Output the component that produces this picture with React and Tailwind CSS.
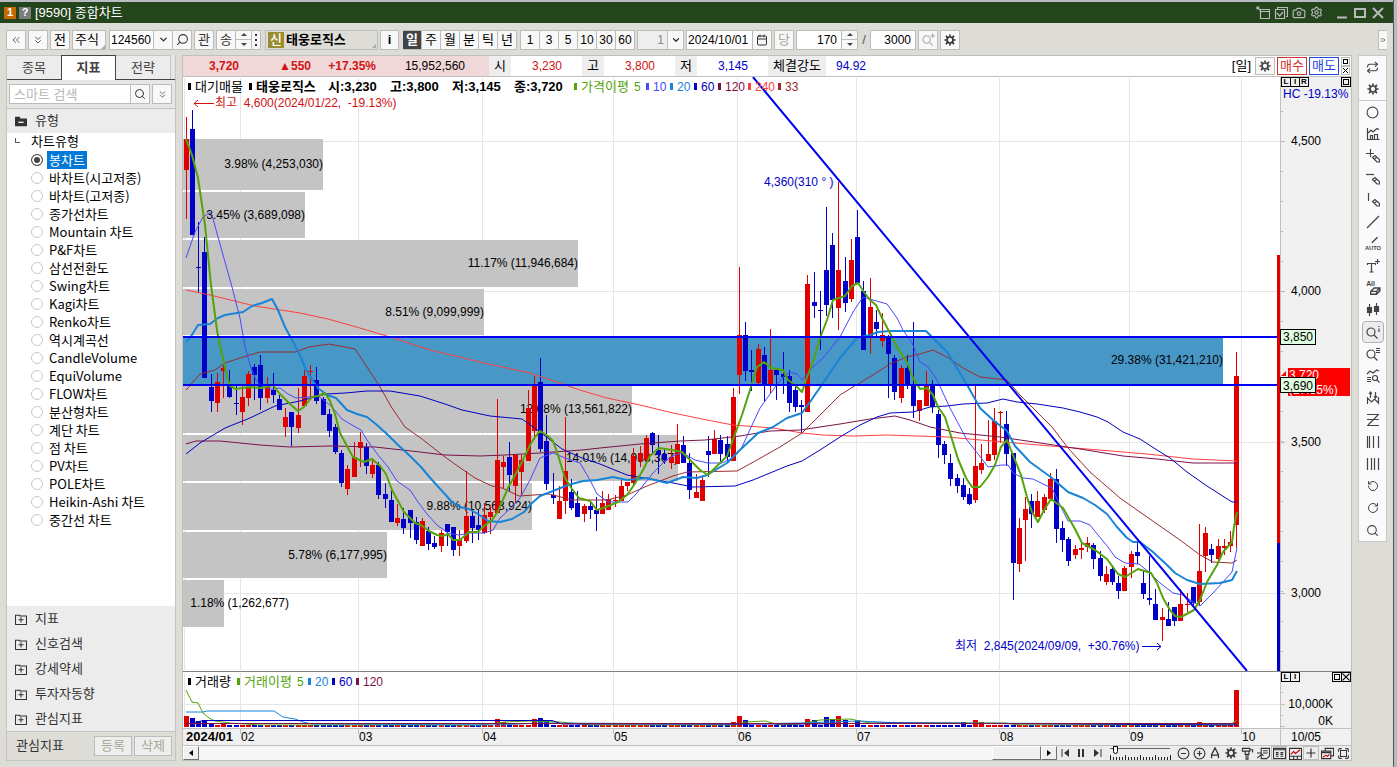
import React, { useState } from 'react';
import {
  Camera, ChevronDown, ChevronsDown, ChevronsLeft, ChevronsRight, Calendar, Circle, CircleMinus, CirclePlus,
  Plus, Repeat, RotateCcw, RotateCw, Search, Settings, Maximize,
} from 'lucide-react';

const RED = '#e00000';
const BLUE = '#0000c8';

// [up, high, low, bodyTop, bodyBottom]
const candles = [
  [1, 117, 219, 139, 170], [0, 110, 235, 129, 235], [0, 222, 292, 267, 268], [0, 237, 378, 252, 378], [0, 374, 412, 387, 401],
  [1, 373, 412, 382, 403], [1, 364, 398, 368, 371], [0, 370, 398, 386, 397], [0, 386, 415, 403, 404], [1, 385, 425, 397, 412],
  [1, 371, 406, 374, 398], [0, 364, 400, 367, 375], [0, 355, 410, 365, 398], [1, 377, 403, 385, 398], [0, 373, 403, 390, 395],
  [0, 395, 410, 399, 410], [1, 408, 437, 417, 427], [0, 412, 446, 412, 427], [1, 388, 433, 415, 428], [1, 370, 406, 376, 406],
  [1, 365, 399, 371, 372], [0, 367, 404, 380, 401], [0, 397, 415, 399, 415], [0, 409, 437, 414, 431], [0, 424, 454, 427, 452],
  [0, 450, 487, 453, 483], [1, 465, 495, 469, 489], [1, 442, 477, 457, 477], [1, 432, 467, 442, 448], [0, 443, 474, 447, 466],
  [1, 458, 478, 465, 474], [0, 462, 499, 465, 495], [0, 483, 508, 494, 499], [0, 490, 522, 500, 522], [1, 504, 526, 518, 523],
  [0, 508, 534, 519, 528], [0, 510, 538, 510, 523], [0, 517, 544, 522, 540], [1, 518, 546, 521, 546], [0, 527, 550, 531, 544],
  [0, 536, 549, 543, 547], [1, 530, 552, 533, 546], [0, 524, 546, 524, 532], [0, 527, 556, 527, 550], [1, 530, 556, 540, 546],
  [1, 471, 543, 516, 541], [0, 510, 543, 516, 528], [0, 510, 540, 525, 530], [1, 503, 534, 515, 533], [1, 506, 534, 512, 517],
  [1, 399, 513, 460, 513], [1, 456, 488, 462, 467], [0, 442, 492, 457, 475], [1, 455, 503, 455, 486], [1, 455, 495, 460, 472],
  [1, 390, 461, 408, 461], [1, 376, 440, 386, 431], [0, 358, 452, 382, 449], [0, 415, 490, 441, 484], [0, 473, 504, 495, 498],
  [1, 486, 519, 501, 519], [1, 417, 514, 471, 501], [0, 479, 510, 492, 508], [0, 491, 517, 503, 517], [1, 504, 522, 506, 514],
  [0, 502, 519, 506, 510], [0, 497, 531, 510, 514], [1, 491, 514, 503, 514], [1, 494, 510, 499, 510], [1, 495, 507, 500, 501],
  [1, 480, 501, 486, 501], [1, 482, 491, 482, 486], [1, 448, 487, 456, 483], [1, 446, 467, 453, 461], [1, 435, 461, 438, 460],
  [0, 432, 454, 433, 445], [0, 435, 474, 450, 455], [0, 449, 464, 454, 460], [1, 445, 469, 457, 463], [1, 424, 464, 444, 464],
  [0, 436, 463, 445, 463], [0, 453, 499, 463, 490], [1, 474, 498, 492, 498], [1, 477, 501, 480, 501], [0, 436, 477, 451, 455],
  [1, 430, 454, 439, 454], [0, 435, 464, 440, 454], [0, 436, 461, 444, 457], [1, 388, 461, 397, 461], [1, 267, 394, 335, 375],
  [0, 322, 381, 335, 371], [0, 350, 391, 370, 372], [1, 344, 384, 349, 383], [0, 347, 402, 355, 384], [1, 329, 393, 370, 384],
  [0, 369, 400, 370, 375], [0, 352, 394, 374, 377], [0, 370, 412, 376, 403], [0, 387, 412, 390, 407], [0, 400, 433, 405, 407],
  [1, 275, 412, 284, 412], [0, 272, 318, 302, 306], [0, 291, 350, 310, 311], [0, 207, 316, 270, 305], [0, 233, 318, 245, 300],
  [1, 182, 330, 270, 308], [0, 257, 312, 281, 303], [1, 239, 302, 260, 299], [0, 210, 284, 237, 283], [0, 281, 350, 291, 350],
  [1, 278, 354, 307, 336], [0, 310, 336, 322, 329], [1, 313, 347, 335, 341], [0, 335, 398, 337, 354], [0, 355, 400, 358, 392],
  [1, 365, 403, 368, 398], [0, 355, 389, 368, 385], [0, 322, 418, 385, 406], [1, 400, 421, 400, 411], [1, 371, 406, 385, 406],
  [0, 380, 413, 385, 407], [0, 410, 458, 414, 445], [0, 441, 464, 444, 455], [0, 454, 486, 463, 479], [0, 474, 493, 478, 486],
  [0, 478, 500, 485, 497], [0, 488, 505, 494, 504], [1, 386, 503, 466, 500], [1, 444, 474, 463, 470], [1, 420, 461, 454, 461],
  [1, 408, 460, 421, 455], [1, 411, 443, 412, 413], [0, 411, 466, 424, 454], [0, 453, 600, 453, 563], [1, 518, 572, 528, 564],
  [1, 497, 561, 509, 520], [0, 494, 528, 501, 514], [1, 491, 517, 501, 517], [1, 494, 513, 497, 510], [1, 473, 500, 479, 499],
  [0, 469, 543, 479, 529], [0, 521, 552, 528, 540], [0, 537, 566, 539, 561], [1, 545, 559, 549, 555], [1, 543, 559, 548, 550],
  [1, 537, 552, 543, 547], [0, 543, 569, 545, 559], [0, 551, 581, 558, 576], [1, 566, 585, 574, 582], [0, 565, 585, 569, 582],
  [0, 576, 599, 583, 591], [1, 566, 591, 568, 591], [1, 551, 578, 554, 567], [0, 542, 564, 552, 556], [0, 571, 599, 583, 594],
  [0, 556, 605, 598, 600], [0, 589, 620, 604, 620], [1, 608, 641, 617, 620], [0, 602, 626, 619, 626], [0, 607, 626, 607, 621],
  [1, 589, 621, 604, 621], [1, 593, 612, 604, 605], [0, 587, 607, 587, 603], [1, 524, 605, 571, 602], [1, 527, 572, 533, 556],
  [0, 544, 563, 549, 555], [1, 539, 563, 546, 559], [1, 539, 555, 546, 548], [1, 531, 552, 542, 546], [1, 352, 548, 376, 525],
];

const candleX = (i) => Math.round(183.8 + i * 6.216);

const averages = [
  { color: '#ff4040', width: 1, points: '186,290 210,295 255,306 300,313 328,319 360,328 390,337 430,350 480,362 530,373 583,391 607,398 640,405 673,413 707,420 733,425 773,428 802,433 823,435 853,436 887,435 947,437 1003,442 1063,447 1147,454 1193,459 1237,461' },
  { color: '#7a1248', width: 1, points: '186,444 196,441 220,441 260,445 290,447 330,446 375,447 420,452 445,455 480,456 505,455 540,453 582,450 600,448 640,444 680,441 705,440 740,436 770,431 800,430 840,424 870,419 895,416 910,420 930,427 960,433 1000,437 1047,444 1080,449 1123,456 1157,459 1193,463 1237,463' },
  { color: '#9a2c2c', width: 1, points: '186,390 200,374 215,370 225,363 240,358 260,352 295,352 309,347 329,344 345,347 355,349 369,370 380,387 392,408 405,427 422,439 445,457 459,467 475,478 492,486 502,488 519,496 549,494 573,500 607,500 627,495 647,486 673,476 687,472 737,471 757,460 780,447 802,433 823,412 840,395 853,387 873,375 890,364 907,357 920,354 933,350 947,357 963,368 980,377 1007,380 1020,395 1043,418 1052,427 1068,448 1090,472 1120,498 1147,517 1180,540 1200,555 1213,562 1232,563 1237,560' },
  { color: '#0000c0', width: 1, points: '186,454 200,443 225,428 250,418 275,406 300,401 326,394 345,393 367,391 390,391 420,396 445,404 462,410 490,416 522,419 540,432 562,449 582,458 600,464 627,475 650,479 673,483 693,487 735,486 753,480 770,473 787,466 802,461 820,450 840,437 860,425 877,417 890,413 913,412 930,407 947,406 963,404 987,403 1003,399 1017,402 1037,404 1063,408 1080,412 1097,417 1108,422 1123,432 1140,439 1157,450 1170,458 1187,472 1207,486 1232,502 1237,502' },
  { color: '#4848ff', width: 1, points: '186,258 195,232 203,217 209,213 212,215 218,237 225,262 232,287 240,318 245,347 251,368 256,380 262,387 271,389 280,388 288,394 296,398 308,397 318,396 325,401 332,407 342,419 352,425 361,430 367,440 378,455 388,467 397,481 410,490 418,502 427,514 437,525 448,533 459,535 470,533 484,533 493,530 500,518 510,509 520,498 530,480 540,458 553,453 565,458 580,463 590,480 597,494 608,502 628,502 637,493 653,473 665,461 675,455 683,453 695,460 708,463 722,463 733,458 742,447 753,423 760,408 773,390 783,377 790,372 797,374 802,380 812,368 823,358 840,337 853,312 863,297 873,300 887,304 897,318 903,330 912,343 920,362 928,367 937,380 950,408 967,440 982,459 988,467 1002,465 1008,465 1013,473 1023,478 1033,479 1043,484 1052,488 1060,505 1068,521 1080,521 1090,525 1098,535 1108,547 1115,557 1125,563 1139,564 1150,573 1160,583 1173,593 1183,595 1193,602 1200,606 1213,593 1223,582 1232,572 1237,548' },
  { color: '#1884d8', width: 2, points: '186,341 190,338 198,325 210,324 218,318 225,315 243,312 252,306 262,303 272,299 278,310 285,327 292,340 299,353 307,372 318,388 327,395 336,398 347,410 357,414 367,417 377,425 388,435 397,444 410,456 421,467 432,480 443,492 452,502 460,507 469,509 478,514 488,521 500,522 512,519 524,512 532,503 540,496 553,491 568,485 583,481 597,480 613,477 627,480 647,478 667,483 683,477 697,478 707,475 727,463 740,450 758,433 773,427 787,418 802,413 810,402 823,383 840,358 857,338 870,335 878,332 890,331 926,331 933,338 947,352 960,373 970,390 980,408 993,420 1007,431 1015,446 1030,462 1052,478 1068,492 1083,498 1095,505 1107,514 1117,527 1127,538 1133,542 1140,542 1153,552 1167,565 1175,573 1187,580 1200,584 1220,583 1232,580 1237,571' },
  { color: '#55a30a', width: 2, points: '186,139 192,155 198,178 205,225 211,285 217,330 219,341 226,372 230,386 236,389 249,387 262,388 273,385 280,394 290,404 298,411 304,407 312,397 318,396 325,393 330,401 335,414 340,433 348,448 353,457 364,462 372,459 380,466 386,474 392,490 404,512 415,523 421,525 429,531 437,535 443,536 448,534 453,540 460,540 469,532 478,532 484,526 492,520 497,513 502,502 508,488 514,477 522,462 530,445 535,437 540,431 548,436 553,441 558,455 565,478 572,489 579,498 590,501 597,510 606,507 618,502 627,495 634,485 643,470 650,456 659,448 672,450 682,452 690,460 700,470 708,475 717,466 727,456 735,434 742,415 750,390 757,367 764,362 771,368 783,370 788,380 795,385 802,392 806,380 813,362 820,338 827,320 833,300 845,296 852,286 858,283 864,292 870,300 876,305 883,320 890,333 897,347 907,362 913,378 920,389 927,388 933,395 938,407 945,417 950,433 958,459 966,478 972,487 980,487 988,477 995,465 1001,447 1007,440 1015,460 1021,475 1027,497 1032,512 1038,522 1044,510 1051,499 1063,508 1075,529 1082,543 1095,550 1107,559 1118,574 1125,577 1138,569 1151,573 1157,583 1163,598 1170,610 1175,616 1181,617 1194,610 1200,600 1207,582 1217,565 1223,552 1232,542 1234,527 1237,512' },
];

const profile = [
  { top: 139, height: 51, end: 323, label: '3.98% (4,253,030)' },
  { top: 192, height: 46, end: 305, label: '3.45% (3,689,098)' },
  { top: 240, height: 47, end: 578, label: '11.17% (11,946,684)' },
  { top: 289, height: 46, end: 484, label: '8.51% (9,099,999)' },
  { top: 337, height: 47, end: 1223, label: '29.38% (31,421,210)', hot: true },
  { top: 386, height: 47, end: 632, label: '12.68% (13,561,822)' },
  { top: 435, height: 46, end: 678, label: '14.01% (14,983,367)' },
  { top: 483, height: 47, end: 532, label: '9.88% (10,563,924)' },
  { top: 532, height: 46, end: 387, label: '5.78% (6,177,995)' },
  { top: 580, height: 47, end: 224, label: '1.18% (1,262,677)', labelEnd: 289 },
];

const months = [
  { x: 240, label: '02' }, { x: 358, label: '03' }, { x: 482, label: '04' }, { x: 613, label: '05' }, { x: 737, label: '06' },
  { x: 856, label: '07' }, { x: 999, label: '08' }, { x: 1129, label: '09' }, { x: 1241, label: '10' },
];

const priceLegend = [
  { x: 188, color: '#000', label: '대기매물' },
  { x: 249, color: '#000', label: '태웅로직스', bold: true },
  { x: 574, color: '#55a30a', label: '가격이평' },
  { x: 646, color: '#4848ff', label: '10' },
  { x: 670, color: '#1884d8', label: '20' },
  { x: 694, color: '#0000c0', label: '60' },
  { x: 718, color: '#7a1248', label: '120' },
  { x: 748, color: '#ff4040', label: '240' },
  { x: 778, color: '#9a2c2c', label: '33' },
];

const volumeLegend = [
  { x: 188, color: '#000', label: '거래량' },
  { x: 237, color: '#55a30a', label: '거래이평' },
  { x: 308, color: '#1884d8', label: '20' },
  { x: 332, color: '#0000c0', label: '60' },
  { x: 356, color: '#7a1248', label: '120' },
];

const volumeTops = {
  0: 716, 1: 718, 2: 721, 3: 720, 4: 723, 6: 723, 50: 719, 51: 722, 56: 719, 57: 718, 58: 721, 88: 722, 89: 716, 90: 720,
  100: 719, 101: 720, 103: 717, 104: 719, 105: 716, 106: 720, 108: 720, 125: 722, 127: 720, 128: 722, 163: 722, 169: 690,
};

const chartTypes = [
  '봉차트', '바차트(시고저종)', '바차트(고저종)', '종가선차트', 'Mountain 차트', 'P&F차트', '삼선전환도', 'Swing차트',
  'Kagi차트', 'Renko차트', '역시계곡선', 'CandleVolume', 'EquiVolume', 'FLOW차트', '분산형차트', '계단 차트', '점 차트',
  'PV차트', 'POLE차트', 'Heikin-Ashi 차트', '중간선 차트',
];

const sections = ['지표', '신호검색', '강세약세', '투자자동향', '관심지표'];

const Glyph = ({ children, size = 14, className = '' }) => (
  <svg width={size} height={size} viewBox="0 0 14 14" fill="none" stroke="currentColor" strokeWidth="1.2" className={className}>
    {children}
  </svg>
);

const Gear = ({ size = 14 }) => (
  <svg width={size} height={size} viewBox="0 0 14 14" fill="none" stroke="currentColor" strokeWidth="2">
    <circle cx="7" cy="7" r="3.5" />
    <path d="M7 0.5v2.500M7 11v2.500M0.500 7h2.500M11 7h2.500M2.300 2.300l2 2M9.700 9.700l2 2M11.700 2.300l-2 2M4.300 9.700l-2 2" />
  </svg>
);

const Pencil = () => <path d="M6.500 8.500l2.500-2 4.500 4v2.500h-2.500zM8.500 10l2.500-2" />;

const tools = [
  { name: '새로고침', icon: <Repeat size={13} strokeWidth={2} /> },
  { name: '설정', icon: <Gear size={12} /> },
  { name: '원', icon: <Circle size={13} strokeWidth={2} /> },
  { name: '보조지표', icon: <Glyph><path d="M1.5 1v11.5h12M4.5 12V8.5h2V12M8.5 12V7.5h3V12M2 6l3-3 2 2 4-3.5 2 1" /></Glyph> },
  { name: '십자선', icon: <Glyph><path d="M0 4.5h8M4.5 0v8" /><Pencil /></Glyph> },
  { name: '수평선', icon: <Glyph><path d="M0 3.5h8" /><Pencil /></Glyph> },
  { name: '수직선', icon: <Glyph><path d="M2.5 0v8" /><Pencil /></Glyph> },
  { name: '추세선', icon: <Glyph><path d="M1 13L13 1" /></Glyph> },
  { name: '자동추세', icon: <Glyph size={16}><path d="M6 6l5-5" /><text x="7" y="12.5" fontSize="5" textAnchor="middle" fill="currentColor" stroke="none" fontWeight="bold">AUTO</text></Glyph> },
  { name: '문자', icon: <Glyph><path d="M1.5 6V4.5h8V6M5.5 4.5V13M3.5 13h4M9 2.5h5M11.5 0v5" /></Glyph> },
  { name: '전체삭제', icon: <Glyph size={16}><text x="1" y="5" fontSize="6" fill="currentColor" stroke="none" fontWeight="bold">All</text><path d="M5 10l3-3h5v2.5l-3 3H5zM5 10h5v2.500M10 10l3-3" /></Glyph> },
  { name: '캔들', icon: <Glyph><path d="M3.5 1v12M10.500 0v12" /><path d="M1.500 4.500h4v5h-4zM8.500 3.500h4v5h-4z" fill="currentColor" /></Glyph> },
  { name: '정보보기', active: true, icon: <Glyph><circle cx="5" cy="7" r="4" /><path d="M8 10l3.500 3.500M13 3.500V7M13 1v1" /></Glyph> },
  { name: '목록보기', icon: <Glyph><circle cx="5" cy="7" r="4" /><path d="M8 10l3.500 3.500M10 1.500h4M10 3.500h4M10 5.500h4" /></Glyph> },
  { name: '패턴검색', icon: <Glyph><path d="M1 5l3-3 3 2 4-3 2 1M1 8.500h4M1 10.500h4M1 12.500h4" /><circle cx="9" cy="9" r="2.500" /><path d="M11 11l2.500 2.500" /></Glyph> },
  { name: '고저표시', icon: <Glyph><path d="M1.500 13V7l4 4 3-3 4 4V6M4.500 1v6M3 3l1.500-2L6 3M9.500 7V1M8 5l1.500 2L11 5" /></Glyph> },
  { name: '피보나치', icon: <Glyph><path d="M1 1.500h12M1 6.500h12M1 12.500h12M2 12L12 2" /></Glyph> },
  { name: '시간대', icon: <Glyph><path d="M1.500 1v12M3.500 1v12M7.500 1v12M12.500 1v12" /></Glyph> },
  { name: '등간격', icon: <Glyph><path d="M1.500 1v12M5.500 1v12M8.500 1v12M12.500 1v12" /></Glyph> },
  { name: '되돌리기', icon: <RotateCcw size={12} strokeWidth={2} /> },
  { name: '다시실행', icon: <RotateCw size={12} strokeWidth={2} /> },
  { name: '확대', icon: <Search size={13} strokeWidth={2} /> },
];

const box = 'flex h-5 items-center justify-center border border-[#bcbcbc] bg-[#f8f8f8] text-[#333]';

const TitleBar = () => (
  <header className="flex h-[23px] items-center border-t-2 border-[#b9bcc2] bg-[#24441c] px-1 text-[#b9b9b9]">
    <span className="mr-[3px] flex h-3 w-3 items-center justify-center bg-[#c46a00] text-[11px] font-bold text-white">1</span>
    <span className="mr-1 flex h-3 w-3 items-center justify-center bg-[#7c7c7c] text-[11px] font-bold text-white">?</span>
    <h1 className="text-[13px] leading-5 text-white">[9590] 종합차트</h1>
    <div className="ml-auto flex items-center gap-1 pr-1">
      <button aria-label="창 이동"><Glyph><path d="M4.5 3.500h9v9h-9zM5 5.500h8M1 1l3 3M1 3.500V1h2.500" /></Glyph></button>
      <button aria-label="창 복사"><Glyph><path d="M3.500 3V1.500h10v9H12M1.500 3.500h9v9h-9zM3 7l2.500 3L9 6" /></Glyph></button>
      <button aria-label="화면 캡처"><Camera size={14} strokeWidth={2} /></button>
      <button aria-label="환경설정"><Settings size={13} strokeWidth={2} /></button>
      <button aria-label="최소화" className="ml-2"><Glyph><path d="M2 11.500h10" strokeWidth="2" /></Glyph></button>
      <button aria-label="최대화"><Glyph><path d="M2 3h10v8H2z" strokeWidth="2" /></Glyph></button>
      <button aria-label="닫기"><Glyph><path d="M2 2l10 10M12 2L2 12" strokeWidth="2" /></Glyph></button>
    </div>
  </header>
);

const Spinner = () => (
  <div className="-ml-px flex h-5 w-[17px] flex-col border border-[#bcbcbc] bg-[#f8f8f8] text-[#444]">
    <button aria-label="증가" className="flex flex-1 items-center justify-center border-b border-[#bcbcbc]">
      <svg width="6" height="3" viewBox="0 0 6 3" fill="currentColor"><path d="M0 3l3-3 3 3z" /></svg>
    </button>
    <button aria-label="감소" className="flex flex-1 items-center justify-center">
      <svg width="6" height="3" viewBox="0 0 6 3" fill="currentColor"><path d="M0 0l3 3 3-3z" /></svg>
    </button>
  </div>
);

const Toolbar = () => {
  const [period, setPeriod] = useState('일');
  return (
    <div className="flex h-8 items-center gap-[2px] px-[6px] pt-px text-[13px]">
      <button aria-label="처음" className={`${box} w-5`}><ChevronsLeft size={12} strokeWidth={1.5} /></button>
      <button aria-label="펼치기" className={`${box} w-5`}><ChevronsDown size={12} strokeWidth={1.5} /></button>
      <button className={`${box} w-5 text-black`}>전</button>
      <button className={`${box} relative w-[34px] pr-1 text-black`}>
        주식
        <span className="absolute bottom-0 right-0 h-0 w-0 border-2 border-transparent border-b-[#aaa] border-r-[#aaa]" />
      </button>
      <div className="ml-px flex">
        <input aria-label="종목코드" defaultValue="124560" className="h-5 w-[45px] border border-[#bcbcbc] bg-white px-px text-xs" />
        <button aria-label="종목 목록" className={`${box} -ml-px w-5`}><ChevronDown size={11} strokeWidth={3} /></button>
        <button aria-label="종목 검색" className={`${box} -ml-px w-5`}><Search size={13} strokeWidth={2} className="-scale-x-100" /></button>
      </div>
      <button className={`${box} w-5`}>관</button>
      <div className="flex">
        <button className={`${box} w-5`}>송</button>
        <Spinner />
        <button aria-label="더보기" className={`${box} -ml-px w-[10px]`}>
          <svg width="2" height="12" viewBox="0 0 2 12" fill="#333"><path d="M0 0h2v2H0zM0 5h2v2H0zM0 10h2v2H0z" /></svg>
        </button>
      </div>
      <button className="relative ml-[2px] flex h-5 w-[113px] items-center border border-[#bcbcbc] bg-[#dddcd6] px-[2px] font-bold">
        <span className="mr-[2px] flex h-4 w-4 items-center justify-center bg-[#9c8c30] font-medium text-white">신</span>
        태웅로직스
        <span className="absolute bottom-px right-px h-0 w-0 border-2 border-transparent border-b-[#aaa] border-r-[#aaa]" />
      </button>
      <button className={`${box} w-[19px] font-bold text-black`}>i</button>
      <div className="ml-[2px] flex">
        {['일', '주', '월', '분', '틱', '년'].map((p) => (
          <button
            key={p}
            onClick={() => setPeriod(p)}
            className={`flex h-5 w-[19px] items-center justify-center border-y border-r border-[#bcbcbc] ${period === p ? 'bg-[#444] font-bold text-white' : 'bg-[#f8f8f8] text-black'}`}
          >
            {p}
          </button>
        ))}
      </div>
      <div className="ml-px flex border-l border-[#bcbcbc] text-xs">
        {[1, 3, 5, 10, 30, 60].map((n) => (
          <button key={n} className="flex h-5 w-[19px] items-center justify-center border-y border-r border-[#bcbcbc] bg-[#f8f8f8] text-black">{n}</button>
        ))}
      </div>
      <div className="flex">
        <input aria-label="주기" defaultValue="1" className="h-5 w-[31px] border border-[#bcbcbc] bg-[#eee] px-[3px] text-right text-xs text-[#888]" />
        <button aria-label="주기 선택" className={`${box} -ml-px w-[17px]`}><ChevronDown size={10} strokeWidth={3} /></button>
      </div>
      <div className="flex">
        <input aria-label="날짜" defaultValue="2024/10/01" className="h-5 w-[67px] border border-[#bcbcbc] bg-white px-px text-xs" />
        <button aria-label="달력" className={`${box} -ml-px w-5`}><Calendar size={12} strokeWidth={2} /></button>
      </div>
      <button className={`${box} w-5 text-[#a8a898]`}>당</button>
      <div className="flex">
        <input aria-label="봉 개수" defaultValue="170" className="h-5 w-[46px] border border-[#bcbcbc] bg-white px-1 text-right text-xs" />
        <Spinner />
      </div>
      <span className="w-2 text-center text-[#555]">/</span>
      <input aria-label="전체 봉 개수" defaultValue="3000" className="h-5 w-[46px] border border-[#bcbcbc] bg-white px-1 text-right text-xs" />
      <button aria-label="확대" className={`${box} w-5 text-[#aaa]`}><Glyph size={13}><circle cx="5" cy="7" r="4" /><path d="M8 10l3.500 3.500M9 3h5M11.500 0.500v5" /></Glyph></button>
      <button aria-label="차트 설정" className={`${box} w-5`}><Gear size={12} /></button>
      <button aria-label="더보기" className={`${box} ml-auto w-[9px] border-r-0`}><ChevronsRight size={8} strokeWidth={2} /></button>
    </div>
  );
};

const Sidebar = () => {
  const [type, setType] = useState('봉차트');
  return (
    <aside className="flex w-[170px] shrink-0 flex-col border-x border-b border-[#c4c4c4] bg-[#e6e6e4] text-[13px] text-[#333]">
      <div className="flex h-[25px] border-b border-[#444] text-[#444]">
        <button className="w-[54px] border-t border-[#c4c4c4] bg-[#ececec]">종목</button>
        <button className="-mb-px w-[55px] border border-b-0 border-[#444] bg-white font-bold">지표</button>
        <button className="w-[55px] border-r border-t border-[#c4c4c4] bg-[#ececec]">전략</button>
      </div>
      <div className="flex h-7 items-center pl-[2px]">
        <input aria-label="스마트 검색" placeholder="스마트 검색" className="h-5 w-[122px] border border-[#bcbcbc] bg-white px-1 placeholder:text-[#b8b8b8]" />
        <button aria-label="검색" className={`${box} -ml-px w-5`}><Search size={12} strokeWidth={2} /></button>
        <button aria-label="펼치기" className={`${box} ml-[2px] w-5`}><ChevronsDown size={11} strokeWidth={1.5} /></button>
      </div>
      <button className="flex h-[25px] items-center gap-2 border-t border-[#c4c4c4] bg-[#ececec] pl-2">
        <Glyph size={12}><path d="M0 2h6v2h8v9H0z" fill="currentColor" stroke="none" /><path d="M4 8.500h6" stroke="#fff" strokeWidth="1.500" /></Glyph>
        유형
      </button>
      <div role="radiogroup" aria-labelledby="chart-type" className="flex-1 bg-white text-black">
        <div className="flex h-[18px] items-center pl-2">
          <span className="mb-1 mr-[11px] h-[5px] w-[5px] border-b border-l border-[#555]" />
          <span id="chart-type">차트유형</span>
        </div>
        {chartTypes.map((t) => (
          <label key={t} className="flex h-[18px] items-center pl-6">
            <input
              type="radio"
              name="chartType"
              checked={type === t}
              onChange={() => setType(t)}
              className="h-3 w-3 appearance-none rounded-full border border-[#c8c8c8] bg-white checked:border-[#555] checked:bg-[#444] checked:ring-2 checked:ring-inset checked:ring-white"
            />
            <span className={`ml-1 px-[2px] font-['Noto_Sans_CJK_KR',sans-serif] leading-[18px] ${type === t ? 'bg-[#0078d7] text-white' : ''}`}>{t}</span>
          </label>
        ))}
      </div>
      {sections.map((s) => (
        <button key={s} className="flex h-[25px] items-center gap-2 bg-[#ececec] pl-2">
          <Glyph size={12}><path d="M0.600 2.600h5v1h7.800v9.800H.6zM4 8h6M7 5v6" /></Glyph>
          {s}
        </button>
      ))}
      <div className="flex h-[29px] items-center gap-[2px] border-t border-[#c4c4c4] bg-[#dddcd6] pl-[9px] pr-[3px]">
        <span className="mr-auto">관심지표</span>
        <button className="h-5 w-[38px] border border-[#bcbcbc] bg-[#eee] leading-4 text-[#a8a898]">등록</button>
        <button className="h-5 w-[38px] border border-[#bcbcbc] bg-[#eee] leading-4 text-[#a8a898]">삭제</button>
      </div>
    </aside>
  );
};

const quotes = [
  { label: '시', value: '3,230', color: 'text-[#d01414]' },
  { label: '고', value: '3,800', color: 'text-[#d01414]' },
  { label: '저', value: '3,145', color: 'text-[#0000c8]' },
];

const QuoteBar = () => (
  <div className="flex h-[21px] items-center border-b border-[#c0c0c0] bg-white text-xs leading-5">
    <div className="flex bg-[#f0d8d8] pr-6 text-right font-bold text-[#d01414]">
      <span className="w-14">3,720</span>
      <span className="w-[72px]">▲550</span>
      <span className="w-[65px]">+17.35%</span>
      <span className="w-[89px] font-normal text-black">15,952,560</span>
    </div>
    {quotes.map((q) => (
      <React.Fragment key={q.label}>
        <span className="w-[22px] bg-[#eee] text-center text-[13px]">{q.label}</span>
        <span className={`w-[71px] pr-5 text-right ${q.color}`}>{q.value}</span>
      </React.Fragment>
    ))}
    <span className="w-[58px] bg-[#eee] text-center text-[13px]">체결강도</span>
    <span className="pl-[10px] text-[#0000c8]">94.92</span>
    <div className="ml-auto flex items-center gap-[2px] pr-px text-[13px]">
      <span className="mr-[2px]">[일]</span>
      <button aria-label="설정" className="flex h-[18px] w-5 items-center justify-center border border-[#bcbcbc] bg-[#f8f8f8] text-[#444]"><Gear size={12} /></button>
      <button className="h-[18px] w-[30px] border border-[#d03030] leading-4 text-[#d03030]">매수</button>
      <button className="h-[18px] w-[30px] border border-[#2048e0] leading-4 text-[#2048e0]">매도</button>
      <div className="flex flex-col">
        <button aria-label="최대화" className="flex h-[9px] w-[9px] items-center justify-center border border-[#bcbcbc]"><span className="h-[5px] w-[5px] border border-black" /></button>
        <button aria-label="닫기" className="flex h-[9px] w-[9px] items-center justify-center border border-[#bcbcbc]"><Glyph size={7}><path d="M2 2l10 10M12 2L2 12" strokeWidth="2" /></Glyph></button>
      </div>
    </div>
  </div>
);

const Legend = ({ items, y }) => items.map((item) => (
  <g key={item.x} fill={item.color}>
    <rect x={item.x} y={y - 8} width="3" height="7" />
    <text x={item.x + 7} y={y} fontSize={/\d/.test(item.label) ? 12 : 13} fontWeight={item.bold ? 'bold' : 'normal'}>{item.label}</text>
  </g>
));

const priceLabels = [{ y: 141, label: '4,500' }, { y: 291, label: '4,000' }, { y: 442, label: '3,500' }, { y: 593, label: '3,000' }];

const PricePane = () => (
  <svg viewBox="183 77 1168 594" className="block h-auto w-full bg-white" role="img" aria-label="가격 차트">
    <g fill="#e6e6e6">
      {[{ x: 184 }, ...months].map((m) => <rect key={m.x} x={m.x} y="78" width="1" height="592" />)}
      {priceLabels.map((p) => <rect key={p.y} x="183" y={p.y} width="1097" height="1" />)}
    </g>
    <g fontSize="12" textAnchor="end">
      {profile.map((p) => (
        <g key={p.top}>
          <rect x="183" y={p.top} width={p.end - 183} height={p.height} fill={p.hot ? '#4797c7' : '#c4c4c4'} />
          <text x={p.labelEnd || p.end} y={Math.floor(p.top + p.height / 2) + 4}>{p.label}</text>
        </g>
      ))}
    </g>
    <g shapeRendering="crispEdges">
      {candles.map(([up, high, low, top, bottom], i) => (
        <g key={i} fill={up ? RED : BLUE}>
          <rect x={candleX(i) + 2} y={high} width="1" height={low - high} />
          <rect x={candleX(i)} y={top} width="5" height={bottom - top} />
        </g>
      ))}
    </g>
    <g fill="none" strokeLinejoin="round">
      {averages.map((a) => <polyline key={a.color} points={a.points} stroke={a.color} strokeWidth={a.width} />)}
    </g>
    <g stroke="#0000f0" strokeWidth="2">
      <path d="M183 337h1098M183 385h1098" />
      <path d="M753 77L1247 671" />
    </g>
    <rect x="1277" y="255" width="3" height="288" fill={RED} />
    <rect x="1277" y="543" width="3" height="128" fill={BLUE} />

    <Legend items={priceLegend} y={91} />
    <g fontSize="13" fontWeight="bold">
      <text x="328" y="91">시:3,230</text>
      <text x="390" y="91">고:3,800</text>
      <text x="452" y="91">저:3,145</text>
      <text x="514" y="91">종:3,720</text>
    </g>
    <text x="634" y="91" fontSize="12" fill="#55a30a">5</text>
    <g fontSize="12" fill="#d01010">
      <path d="M214 103.500h-20M198 100l-4 3.500 4 3.500" stroke="#d01010" fill="none" />
      <text x="215" y="107">최고 &nbsp;4,600(2024/01/22,&nbsp; -19.13%)</text>
    </g>
    <g fontSize="12" fill="#0000c8">
      <text x="764" y="186">4,360(310 ° )</text>
      <text x="955" y="650">최저 &nbsp;2,845(2024/09/09,&nbsp; +30.76%)</text>
      <path d="M1142 646.500h19M1157 643l4 3.500-4 3.500" stroke="#0000c8" fill="none" />
    </g>

    <rect x="1281" y="77" width="70" height="594" fill="#f0f0f0" />
    <rect x="1280" y="77" width="1" height="594" fill="#c0c0c0" />
    <g fill="#b8b8b8">
      {Array.from({ length: 19 }, (_, i) => 111 + i * 30).map((y) => <rect key={y} x="1281" y={y} width="2" height="1" />)}
      {priceLabels.map((p) => <rect key={p.y} x="1281" y={p.y} width="4" height="1" />)}
    </g>
    <g fontSize="12">
      {priceLabels.map((p) => <text key={p.y} x="1291" y={p.y + 4}>{p.label}</text>)}
      <text x="1283" y="98" fill="#0000c8">HC -19.13%</text>
      <rect x="1288" y="368" width="62" height="28" fill="#ff0000" />
      <path d="M1281 376l5-5v5z" fill="#ff0000" />
      <text x="1289" y="379" fill="#fff">3,720</text>
      <text x="1289" y="394" fill="#fff">(17.35%)</text>
      <rect x="1280.500" y="329.500" width="35" height="15" fill="#e0ffe0" stroke="#000" />
      <text x="1283" y="341">3,850</text>
      <rect x="1280.500" y="377.500" width="35" height="15" fill="#e0ffe0" stroke="#000" />
      <text x="1283" y="390">3,690</text>
    </g>
  </svg>
);

const VolumePane = () => (
  <svg viewBox="183 672 1168 73" className="block h-auto w-full bg-white" role="img" aria-label="거래량 차트">
    <g fill="#e6e6e6">
      {[{ x: 184 }, ...months].map((m) => <rect key={m.x} x={m.x} y="673" width="1" height="54" />)}
      <rect x="183" y="704" width="1097" height="1" />
    </g>
    <g shapeRendering="crispEdges">
      {candles.map(([up], i) => {
        const top = volumeTops[i] || 725;
        return <rect key={i} x={candleX(i)} y={top} width="5" height={727 - top} fill={up ? RED : BLUE} />;
      })}
    </g>
    <g fill="none">
      <polyline points="186,690 192,702 198,703 203,713 209,718 215,721 230,723 260,725 480,725 505,722 530,721 560,722 590,725 735,725 745,722 765,721 780,725 800,724 820,720 850,719 870,723 985,723 1005,723 1020,725 1230,725 1237,720" stroke="#55a30a" />
      <polyline points="186,712 203,712 207,711 274,711 283,717 295,719 303,722 312,724 500,725 540,723 740,724 800,723 860,721 900,723 1237,724" stroke="#1884d8" />
      <polyline points="186,724 204,720.500 552,720.500 562,724 800,724 900,723 1237,725" stroke="#0000c0" />
      <polyline points="186,723.500 1237,723.500" stroke="#7a1248" />
    </g>
    <Legend items={volumeLegend} y={686} />
    <text x="297" y="686" fontSize="12" fill="#55a30a">5</text>

    <rect x="183" y="728" width="1168" height="17" fill="#f0f0f0" />
    <rect x="1281" y="672" width="70" height="73" fill="#f0f0f0" />
    <g fill="#c0c0c0">
      <rect x="1280" y="672" width="1" height="73" />
      <rect x="183" y="728" width="1168" height="1" />
      <rect x="1281" y="692" width="2" height="1" />
      <rect x="1281" y="704" width="4" height="1" />
      <rect x="1281" y="715" width="2" height="1" />
      <rect x="1281" y="726" width="4" height="1" />
      {months.map((m) => <rect key={m.x} x={m.x} y="729" width="1" height="5" />)}
    </g>
    <g fontSize="12">
      <text x="186" y="741" fontSize="13" fontWeight="bold">2024/01</text>
      {months.map((m) => <text key={m.x} x={m.x + 1} y="741">{m.label}</text>)}
      <text x="1291" y="741">10/05</text>
      <text x="1333" y="708" textAnchor="end">10,000K</text>
      <text x="1333" y="725" textAnchor="end">0K</text>
    </g>
  </svg>
);

const miniButton = '-mr-px flex h-[10px] w-[10px] items-center justify-center border border-black bg-[#f0f0f0] text-[8px] font-bold leading-none';

const PaneButtons = ({ letters, closable }) => (
  <div className="absolute right-0 top-0 flex w-[70px] justify-between pr-px">
    <div className="flex">
      {letters.map((l) => <button key={l} className={miniButton}>{l}</button>)}
    </div>
    <div className="flex">
      <button aria-label="확대" className={miniButton}><span className="h-[6px] w-[6px] border border-black" /></button>
      {closable && <button aria-label="닫기" className={miniButton}><Glyph size={8}><path d="M1 1l12 12M13 1L1 13" strokeWidth="2" /></Glyph></button>}
    </div>
  </div>
);

const footerIcons = [
  { name: '축소', icon: <CircleMinus size={13} strokeWidth={2} /> },
  { name: '확대', icon: <CirclePlus size={13} strokeWidth={2} /> },
  { name: '글자', icon: <Glyph size={12}><path d="M3 13V9l4-8 4 8v4M3 9.500h8" strokeWidth="1.500" /></Glyph> },
  { name: '설정', icon: <Gear size={12} /> },
  { name: '필터', icon: <Glyph size={13}><path d="M1.500 1.500h8v3h-8zM9.500 3h3v3M4.500 5v3h4V5M5.500 8v5h2V8" /></Glyph> },
  { name: '편집', icon: <Glyph size={13}><path d="M4.500 1.500h9v8l-3 3h-6zM6.500 4h5M6.500 6.500h5M0 6.500h4l3 3M0 12l5-4" /></Glyph> },
  { name: '표', active: true, icon: <Glyph size={13}><path d="M0.500 1.500h13v11H.5zM1 3h12M3 6h3M8 6h3M3 8h3M8 8h3M3 10h3M8 10h3" /></Glyph> },
  { name: '차트', icon: <Glyph size={13}><path d="M0.500 1.500h13v12H.5zM1 10h12M5 10v3M9 10v3" /><path d="M2 8l3-3 2 2 5-4" stroke="#c00000" /></Glyph> },
  { name: '십자선', active: true, icon: <Plus size={14} strokeWidth={2} /> },
  { name: '창 겹치기', icon: <Glyph size={13}><path d="M4.500 4V1.500h9v8H11M0.500 4.500h10v8H.5zM1 6h9" /><path d="M2 11l3-2 2 1 2-2" stroke="#c00000" /></Glyph> },
  { name: '전체화면', icon: <span className="relative flex"><Maximize size={13} strokeWidth={2} /><span className="absolute inset-[3px] border border-[#333]" /></span> },
];

const arrowButton = 'flex h-[14px] w-4 shrink-0 items-center justify-center border border-white border-b-[#707070] border-r-[#707070] bg-[#f0f0f0]';

const ChartFooter = () => (
  <div className="flex h-[15px] items-center border-t border-[#c0c0c0] bg-[#ececec] text-[#333]">
    <button aria-label="왼쪽으로" className={arrowButton}><svg width="4" height="6" viewBox="0 0 4 6"><path d="M4 0v6L0 3z" /></svg></button>
    <div className="flex h-[14px] flex-1 justify-end bg-[#f6f6f6]">
      <div className="w-[49px] border border-white border-b-[#707070] border-r-[#707070] bg-[#f0f0f0]" />
    </div>
    <button aria-label="오른쪽으로" className={arrowButton}><svg width="4" height="6" viewBox="0 0 4 6"><path d="M0 0v6l4-3z" /></svg></button>
    <div className="flex w-[53px] items-center justify-between pl-1 pr-2">
      <button aria-label="처음으로"><svg width="9" height="8" viewBox="0 0 9 8" fill="currentColor"><path d="M0.500 0h1v8h-1zM8 0v8L3 4z" /></svg></button>
      <button aria-label="일시정지"><svg width="7" height="8" viewBox="0 0 7 8" fill="currentColor"><path d="M0 0h2v8H0zM4 0h2v8H4z" /></svg></button>
      <button aria-label="끝으로"><svg width="9" height="8" viewBox="0 0 9 8" fill="currentColor"><path d="M7.500 0h1v8h-1zM1 0v8l5-4z" /></svg></button>
    </div>
    <div className="relative h-[14px] w-[65px]">
      <svg width="61" height="14" viewBox="0 0 61 14" className="block">
        <path d="M0 2.500h60" stroke="#666" />
        {Array.from({ length: 21 }, (_, i) => <rect key={i} x={i * 3} y={i % 5 ? 11 : 9} width="1" height="5" fill="#222" />)}
      </svg>
      <input
        type="range"
        aria-label="속도"
        defaultValue="5"
        className="absolute left-0 top-0 h-2 w-[61px] appearance-none bg-transparent [&::-webkit-slider-thumb]:h-2 [&::-webkit-slider-thumb]:w-[5px] [&::-webkit-slider-thumb]:appearance-none [&::-webkit-slider-thumb]:rounded-b [&::-webkit-slider-thumb]:border [&::-webkit-slider-thumb]:border-black [&::-webkit-slider-thumb]:bg-white"
      />
    </div>
    {footerIcons.map((f) => (
      <button key={f.name} aria-label={f.name} className={`flex h-[14px] w-4 shrink-0 items-center justify-center ${f.active ? 'outline outline-1 -outline-offset-1 outline-[#bcbcbc]' : ''}`}>{f.icon}</button>
    ))}
  </div>
);

const App = () => {
  return (
    <div className="flex min-h-screen bg-[#dddcd6] font-['Liberation_Sans','Noto_Sans_CJK_KR',sans-serif] text-black">
      <div className="flex min-w-0 flex-1 flex-col">
        <TitleBar />
        <Toolbar />
        <div className="flex flex-1 items-stretch px-[6px] pb-[6px]">
          <Sidebar />
          {/* Chart */}
          <main className="ml-[6px] min-w-0 flex-1 self-start border border-[#c0c0c0]">
            <QuoteBar />
            <div className="relative">
              <PricePane />
              <PaneButtons letters={['L', 'I', 'R']} />
            </div>
            <div className="relative border-t border-[#808080]">
              <VolumePane />
              <PaneButtons letters={['L', 'I']} closable />
            </div>
            <ChartFooter />
          </main>
          {/* Drawing tools */}
          <nav className="ml-[6px] flex w-[29px] shrink-0 flex-col items-center self-start border border-[#c8c8c8] bg-[#fafafa] text-[#444]">
            {tools.map((t, i) => (
              <React.Fragment key={t.name}>
                <button aria-label={t.name} className={`flex h-[22px] w-[22px] items-center justify-center ${t.active ? 'rounded border border-[#b0b0b0] bg-[#ececec]' : ''}`}>{t.icon}</button>
                {i === 1 && <div className="h-px w-full bg-[#c8c8c8]" />}
              </React.Fragment>
            ))}
          </nav>
        </div>
      </div>
      <div className="w-1 border-l border-[#555] bg-[#b4b9c2]" />
    </div>
  );
};

export default App;
